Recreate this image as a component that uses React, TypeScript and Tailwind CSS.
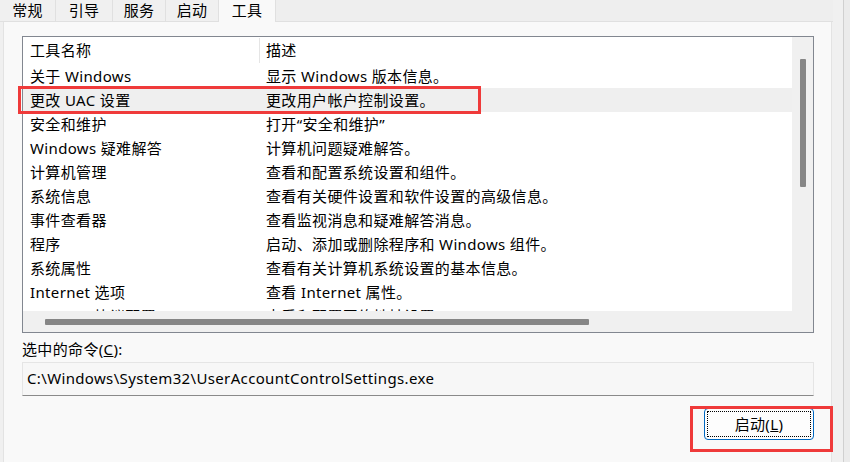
const rows: [string, string][] = [
  ["关于 Windows", "显示 Windows 版本信息。"],
  ["更改 UAC 设置", "更改用户帐户控制设置。"],
  ["安全和维护", "打开“安全和维护”"],
  ["Windows 疑难解答", "计算机问题疑难解答。"],
  ["计算机管理", "查看和配置系统设置和组件。"],
  ["系统信息", "查看有关硬件设置和软件设置的高级信息。"],
  ["事件查看器", "查看监视消息和疑难解答消息。"],
  ["程序", "启动、添加或删除程序和 Windows 组件。"],
  ["系统属性", "查看有关计算机系统设置的基本信息。"],
  ["Internet 选项", "查看 Internet 属性。"],
  ["Internet 协议配置", "查看和配置网络地址设置。"],
];

const tabs = [
  { label: "常规", w: "w-[56px]" },
  { label: "引导", w: "w-[57px]" },
  { label: "服务", w: "w-[53px]" },
  { label: "启动", w: "w-[53px]" },
];

export default function App() {
  return (
    <div className="relative flex h-[462px] w-[850px] overflow-hidden bg-[#f0f0f0] font-['Noto_Sans','Noto_Sans_CJK_SC',sans-serif] text-[15px] tracking-[0.35px] text-black">
      <div className="flex w-[843px] flex-col">
        {/* tab strip */}
        <div className="flex h-[22px]">
          {tabs.map((t) => (
            <div
              key={t.label}
              className={`${t.w} flex h-[22px] items-start justify-center border-r border-b border-[#e0e0e0] bg-[#f0f0f0] leading-[20px]`}
            >
              {t.label}
            </div>
          ))}
          <div className="flex h-[22px] w-[57px] items-start justify-center border-r border-[#e0e0e0] bg-[#f9f9f9] leading-[20px]">
            工具
          </div>
          <div className="h-[22px] w-[557px] border-b border-[#e0e0e0] bg-[#eeeeee]" />
        </div>

        {/* panel */}
        <div className="ml-[3px] flex h-[440px] w-[829px] flex-col border-x border-[#e3e3e3] bg-[#f9f9f9] pt-[14px] pl-[18px]">
          <div className="flex h-[297px] w-[792px] flex-col border border-[#828790] bg-white">
            <div className="flex h-[274px]">
              <div className="w-[769px] overflow-hidden">
                <div className="flex h-[27px] items-center">
                  <div className="w-[236px] pl-[7px]">工具名称</div>
                  <div className="h-[25px] border-l border-[#e5e5e5] pl-[6px] leading-[25px]">描述</div>
                </div>
                {rows.map(([name, desc], i) => (
                  <div
                    key={name}
                    className={`flex h-[24px] items-center whitespace-nowrap ${i === 1 ? "bg-[#efefef]" : ""}`}
                  >
                    <div className="w-[236px] pl-[7px]">{name}</div>
                    <div className="pl-[7px]">{desc}</div>
                  </div>
                ))}
              </div>
              <div className="flex w-[21px] justify-center bg-[#f0f0f0] pt-[22px]">
                <div className="h-[128px] w-[6px] rounded-[1px] bg-[#868686]" />
              </div>
            </div>
            <div className="flex h-[21px] items-center bg-[#f0f0f0] pl-[22px]">
              <div className="h-[6px] w-[544px] rounded-[1px] bg-[#868686]" />
            </div>
          </div>

          <div className="mt-[4px] h-[24px] leading-[24px]">
            选中的命令(<span className="underline">C</span>):
          </div>
          <div className="mt-[1px] flex h-[34px] w-[792px] items-center border border-[#e5e5e5] border-b-[#8a8a8a] bg-[#f7f7f7] pb-[2px] pl-[4px]">
            C:\Windows\System32\UserAccountControlSettings.exe
          </div>

          <div className="mt-[12px] flex w-[792px] justify-end">
            <button className="h-[32px] w-[110px] rounded-[4px] border border-[#0067c0] bg-[#fdfdfd] p-[2px]">
              <div className="flex h-full w-full items-center justify-center border border-dotted border-black">
                启动(<span className="underline">L</span>)
              </div>
            </button>
          </div>
        </div>
      </div>
      <div className="w-px bg-[#d0d0d0]" />
      <div className="flex-1 bg-[#ebebeb]" />

      {/* annotation boxes */}
      <div className="absolute top-[86px] left-[18px] h-[28px] w-[463px] border-[3px] border-[#ef3a3a]" />
      <div className="absolute top-[406px] left-[690px] h-[46px] w-[143px] border-[3px] border-[#ef3a3a]" />
    </div>
  );
}
